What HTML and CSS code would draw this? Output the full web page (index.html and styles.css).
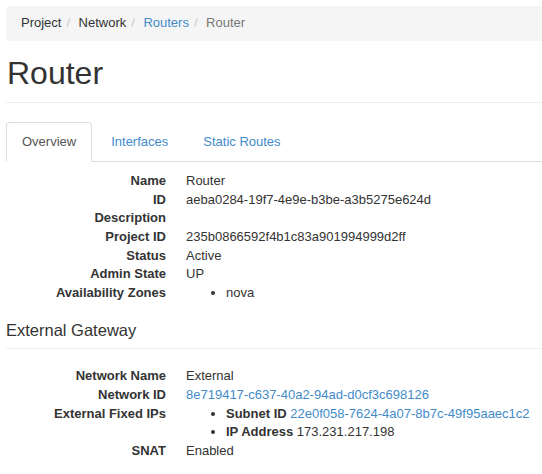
FILE: index.html
```html
<!DOCTYPE html>
<html>
<head>
<meta charset="utf-8">
<link rel="stylesheet" href="styles.css">
</head>
<body>
<div class="page">
  <ol class="breadcrumb">
    <li>Project</li>
    <li>Network</li>
    <li><a href="#">Routers</a></li>
    <li class="active">Router</li>
  </ol>
  <div class="page-header"><h1>Router</h1></div>
  <ul class="nav-tabs">
    <li class="active"><a href="#">Overview</a></li>
    <li><a href="#">Interfaces</a></li>
    <li><a href="#">Static Routes</a></li>
  </ul>
  <div class="tab-content">
    <dl class="dl-horizontal">
      <dt>Name</dt><dd>Router</dd>
      <dt>ID</dt><dd>aeba0284-19f7-4e9e-b3be-a3b5275e624d</dd>
      <dt>Description</dt><dd></dd>
      <dt>Project ID</dt><dd>235b0866592f4b1c83a901994999d2ff</dd>
      <dt>Status</dt><dd>Active</dd>
      <dt>Admin State</dt><dd>UP</dd>
      <dt>Availability Zones</dt><dd><ul class="list"><li>nova</li></ul></dd>
    </dl>
    <h4>External Gateway</h4>
    <hr>
    <dl class="dl-horizontal">
      <dt>Network Name</dt><dd>External</dd>
      <dt>Network ID</dt><dd><a href="#">8e719417-c637-40a2-94ad-d0cf3c698126</a></dd>
      <dt>External Fixed IPs</dt>
      <dd><ul class="list">
        <li><strong>Subnet ID</strong> <a href="#">22e0f058-7624-4a07-8b7c-49f95aaec1c2</a></li>
        <li><strong>IP Address</strong> 173.231.217.198</li>
      </ul></dd>
      <dt>SNAT</dt><dd>Enabled</dd>
    </dl>
  </div>
</div>
</body>
</html>
```
FILE: styles.css
```css
html, body {
  margin: 0;
  padding: 0;
  overflow: hidden;
}
body {
  font-family: "Liberation Sans", Arial, Helvetica, sans-serif;
  font-size: 13px;
  line-height: 1.428571;
  color: #333;
  background: #fff;
}
a {
  color: #428bca;
  text-decoration: none;
}
.page {
  margin-left: 6px;
  margin-right: -20px;
  padding-top: 6px;
}
.breadcrumb {
  list-style: none;
  margin: 0;
  padding: 8px 15px;
  background: #f5f5f5;
  border-radius: 4px;
  display: flex;
}
.breadcrumb li + li::before {
  content: "/";
  padding: 0 8.5px 0 5px;
  color: #ccc;
}
.breadcrumb .active { color: #777; }
.page-header {
  margin: 10px 0 19px;
  padding-bottom: 11px;
  border-bottom: 1px solid #eee;
}
.page-header h1 {
  margin: 0 0 0 1px;
  font-size: 32px;
  font-weight: 400;
  line-height: 1.1;
  padding-top: 5px;
}
.nav-tabs {
  list-style: none;
  margin: 0;
  padding: 0;
  display: flex;
  border-bottom: 1px solid #ddd;
}
.nav-tabs li {
  margin-bottom: -1px;
  margin-right: 3px;
}
.nav-tabs a {
  display: block;
  padding: 10px 15px;
  border: 1px solid transparent;
  border-radius: 4px 4px 0 0;
  line-height: 1.428571;
}
.nav-tabs .active a {
  color: #555;
  background: #fff;
  border-color: #ddd #ddd transparent;
}
.tab-content {
  padding-top: 10px;
}
.dl-horizontal {
  display: grid;
  grid-template-columns: 160px 1fr;
  column-gap: 20px;
  margin: 0 0 19px;
}
.dl-horizontal dt {
  font-weight: 700;
  text-align: right;
  white-space: nowrap;
}
.dl-horizontal dd {
  margin: 0;
  min-height: 18.57px;
}
.list {
  margin: 0;
  padding-left: 40px;
}
h4 {
  font-size: 16.5px;
  font-weight: 400;
  line-height: 1.1;
  margin: 0 0 9px;
}
hr {
  border: 0;
  border-top: 1px solid #eee;
  margin: 0 0 18px;
}
```
